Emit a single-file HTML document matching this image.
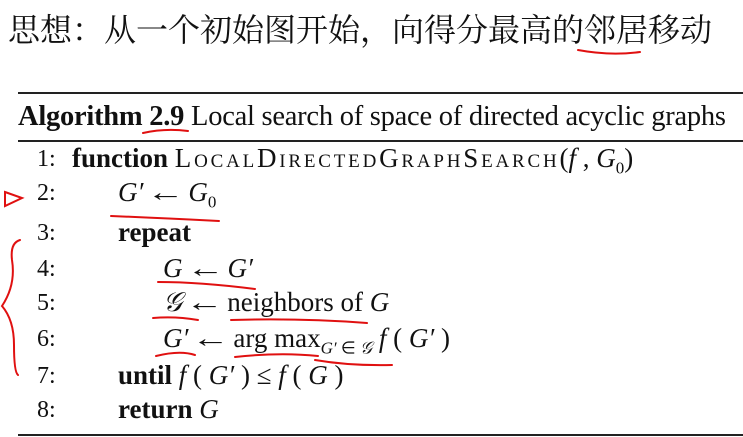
<!DOCTYPE html>
<html><head><meta charset="utf-8"><style>
body{margin:0;width:743px;height:437px;background:#fff;overflow:hidden;position:relative;font-family:"Liberation Serif",serif;color:#111}
.a{position:absolute;white-space:nowrap}
.cn{font-family:"Liberation Serif","Noto Serif CJK SC",serif;font-size:32px;left:8px;top:5px}
.rule{position:absolute;left:18px;right:0;background:#222}
.ln{font-size:27px}
.n{font-size:24px}
b{font-weight:bold}
i{font-style:italic}
.sc{font-variant:small-caps;letter-spacing:2.8px}
.ar{margin:0 9px;display:inline-block;transform:scaleX(1.4)}
sub{font-size:17px}
</style></head><body>
<div class="a cn">思想：从一个初始图开始，向得分最高的邻居移动</div>
<div class="rule" style="top:92px;height:2px"></div>
<div class="a" style="left:18px;top:101px;font-size:28.5px;letter-spacing:-0.25px"><b>Algorithm 2.9</b> Local search of space of directed acyclic graphs</div>
<div class="rule" style="top:140px;height:1.5px"></div>

<div class="a n" style="top:146px;left:37px">1:</div><div class="a ln" style="top:143px;left:72px"><b>function</b> <span class="sc">LocalDirectedGraphSearch</span>(<i>f</i> , <i>G</i><sub>0</sub>)</div>
<div class="a n" style="top:180px;left:37px">2:</div><div class="a ln" style="top:177px;left:118px"><i>G′</i><span class="ar">←</span><i>G</i><sub>0</sub></div>
<div class="a n" style="top:220px;left:37px">3:</div><div class="a ln" style="top:217px;left:118px"><b>repeat</b></div>
<div class="a n" style="top:256px;left:37px">4:</div><div class="a ln" style="top:253px;left:163px"><i>G</i><span class="ar">←</span><i>G′</i></div>
<div class="a n" style="top:290px;left:37px">5:</div><div class="a ln" style="top:287px;left:163px"><i>𝒢</i><span class="ar">←</span>neighbors of <i>G</i></div>
<div class="a n" style="top:326px;left:37px">6:</div><div class="a ln" style="top:323px;left:163px"><i>G′</i><span class="ar">←</span>arg max<sub><i>G′</i> ∈ <i>𝒢</i></sub> <i>f</i> ( <i>G′</i> )</div>
<div class="a n" style="top:363px;left:37px">7:</div><div class="a ln" style="top:360px;left:118px"><b>until</b> <i>f</i> ( <i>G′</i> ) ≤ <i>f</i> ( <i>G</i> )</div>
<div class="a n" style="top:397px;left:37px">8:</div><div class="a ln" style="top:394px;left:118px"><b>return</b> <i>G</i></div>
<div class="rule" style="top:434px;height:1.5px"></div>

<svg class="a" style="left:0;top:0" width="743" height="437" fill="none" stroke="#e01010" stroke-width="2" stroke-linecap="round">
<path d="M578 50 Q610 56 640 52"/>
<path d="M143 133 Q165 128 188 131"/>
<path d="M5 192 L22 198 L5 206 Z"/>
<path d="M111 216 Q160 218 219 221"/>
<path d="M20 240 Q10 243 12 260 Q16 285 2 306 Q14 320 14 345 Q14 372 18 375"/>
<path d="M158 282 Q200 282 255 289"/>
<path d="M153 318 Q175 316 198 320"/>
<path d="M231 320 Q300 318 367 323"/>
<path d="M156 356 Q180 350 195 355"/>
<path d="M235 357 Q280 352 318 356"/>
<path d="M315 360 Q350 366 392 365"/>
</svg>
</body></html>
